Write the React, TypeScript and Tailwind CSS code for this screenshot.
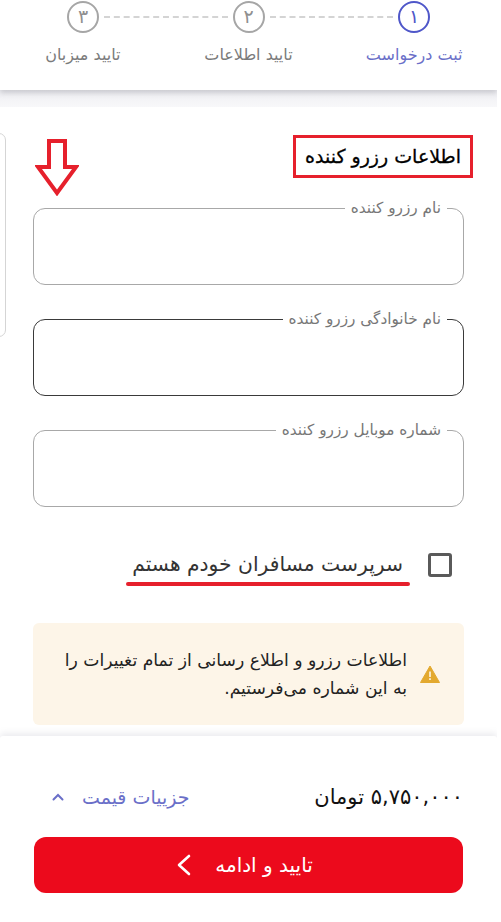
import React from "react";

function Step({ n, active }: { n: string; active?: boolean }) {
  return (
    <div className={active ? "flex h-[32px] w-[32px] shrink-0 items-center justify-center rounded-full border-[2px] border-[#4f57c9] pb-[1px] text-[19px] text-[#4f57c9]" : "flex h-[32px] w-[32px] shrink-0 items-center justify-center rounded-full border-[2px] border-[#a6a6a6] pb-[1px] text-[19px] text-[#8f8f8f]"}>
      {n}
    </div>
  );
}

function Field({ label, dark }: { label: string; dark?: boolean }) {
  return (
    <fieldset className={dark ? "h-[85px] rounded-[12px] border-[1.5px] border-[#3a3a3a] bg-white px-[10px]" : "h-[85px] rounded-[12px] border-[1.5px] border-[#a8a8a8] bg-white px-[10px]"}>
      <legend className="ml-auto mr-[6px] px-[6px] text-[15.3px] leading-[16px] text-[#777777]">{label}</legend>
    </fieldset>
  );
}

export default function App() {
  return (
    <div dir="rtl" className="relative flex h-[922px] w-[497px] flex-col overflow-hidden bg-white font-['DejaVu_Sans','Noto_Sans',sans-serif]">
      <header className="relative h-[90px] shrink-0 bg-white pt-[1px] shadow-[0_3px_5px_rgba(120,120,130,0.3)]">
        <div className="flex items-center px-[67px]">
          <Step n="۱" active />
          <div className="mx-[5px] flex-1 border-t-[2px] border-dashed border-[#d4d4d4]" />
          <Step n="۲" />
          <div className="mx-[5px] flex-1 border-t-[2px] border-dashed border-[#d4d4d4]" />
          <Step n="۳" />
        </div>
        <div className="mt-[12px] grid grid-cols-3 text-center text-[16px] leading-[20px] text-[#7b7b7b]">
          <span className="text-[#6a6fc8]">ثبت درخواست</span>
          <span>تایید اطلاعات</span>
          <span>تایید میزبان</span>
        </div>
      </header>
      <div className="h-[17px] shrink-0 bg-gradient-to-b from-[#eeeef2] to-[#f8f8fa]" />

      <main className="relative flex-1 px-[33px]">
        <div className="absolute left-[-8px] top-[26px] h-[204px] w-[14px] rounded-[8px] border border-[#d5d5d5] bg-white" />
        <div className="flex items-start justify-between pt-[28px]">
          <h1 className="-mr-[9px] flex h-[43px] w-[180px] items-center justify-center whitespace-nowrap border-[3px] border-[#e6202c] text-[19px] font-normal text-black [-webkit-text-stroke:0.3px_black]">اطلاعات رزرو کننده</h1>
          <svg width="44" height="57" viewBox="0 0 44 57" className="ml-[2px] mt-[4px]">
            <path d="M14 2 H30 V28 H41 L22 54 L3 28 H14 Z" fill="white" stroke="#e6202c" strokeWidth="4" strokeLinejoin="miter" />
          </svg>
        </div>
        <div className="mt-[4px] flex flex-col gap-[26px]">
          <Field label="نام رزرو کننده" />
          <Field label="نام خانوادگی رزرو کننده" dark />
          <Field label="شماره موبایل رزرو کننده" />
        </div>
        <div className="mt-[44px] flex items-center pr-[12px]">
          <div className="h-[24px] w-[24px] shrink-0 rounded-[3px] border-[3px] border-[#5a5a5a]" />
          <div className="relative mr-[25px]">
            <span className="text-[20.3px] leading-[26px] text-[#333333]">سرپرست مسافران خودم هستم</span>
            <div className="absolute -bottom-[8px] -left-[6px] -right-[7px] h-[4px] rounded-full bg-[#e6202c]" />
          </div>
        </div>
        <div className="mt-[45px] flex h-[102px] items-center rounded-[6px] bg-[#fdf5e8] pl-[24px] pr-[24px]">
          <svg width="20" height="18" viewBox="0 0 20 18" className="shrink-0">
            <path d="M10 1 L19.5 17.5 H0.5 Z" fill="#e3a92f" stroke="#e3a92f" strokeLinejoin="round" />
            <rect x="9.2" y="6.5" width="1.6" height="5.5" fill="#fdf5e8" />
            <rect x="9.2" y="13.2" width="1.6" height="1.8" fill="#fdf5e8" />
          </svg>
          <p className="mr-[13px] text-[17.2px] leading-[28px] text-[#222222]">اطلاعات رزرو و اطلاع رسانی از تمام تغییرات را به این شماره می‌فرستیم.</p>
        </div>
      </main>

      <footer className="h-[186px] shrink-0 rounded-t-[3px] bg-white px-[34px] shadow-[0_-3px_6px_rgba(130,130,150,0.15)]">
        <div className="flex items-center justify-between pt-[48px]">
          <span className="text-[21px] leading-[26px] text-[#111111]">۵,۷۵۰,۰۰۰ تومان</span>
          <div className="flex items-center gap-[18px] pl-[18px] text-[#6a6fc8]">
            <span className="text-[19px] leading-[24px]">جزییات قیمت</span>
            <svg width="12" height="8" viewBox="0 0 12 8" fill="none" stroke="#6a6fc8" strokeWidth="2" strokeLinecap="round"><path d="M1.5 6.5 L6 2 L10.5 6.5" /></svg>
          </div>
        </div>
        <button className="mt-[27px] flex h-[56px] w-[429px] items-center justify-center gap-[24px] rounded-[12px] bg-[#ec0a1c] pr-[7px] text-[20px] text-white">
          <span>تایید و ادامه</span>
          <svg width="14" height="22" viewBox="0 0 14 22" fill="none" stroke="white" strokeWidth="2.6" strokeLinecap="round" strokeLinejoin="round"><path d="M12 2 L2 11 L12 20" /></svg>
        </button>
      </footer>
    </div>
  );
}
